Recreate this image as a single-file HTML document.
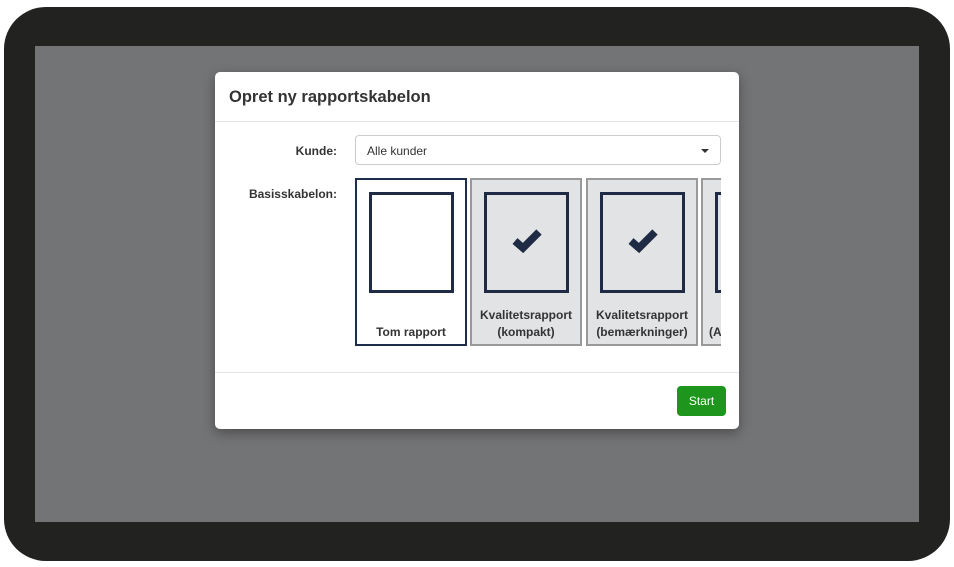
<!DOCTYPE html>
<html><head><meta charset="utf-8"><style>
*{box-sizing:border-box;margin:0;padding:0}
body{width:954px;height:567px;background:#fff;position:relative;overflow:hidden;font-family:"Liberation Sans",sans-serif;color:#333}
.frame{position:absolute;left:4px;top:7px;width:946px;height:554px;background:#222220;border-radius:42px}
.screen{position:absolute;left:35px;top:46px;width:884px;height:476px;background:#737476}
.modal{position:absolute;left:215px;top:72px;width:524px;height:357px;background:#fff;border-radius:5px;box-shadow:0 4px 12px rgba(0,0,0,.35)}
.hdr{height:50px;border-bottom:1px solid #e5e5e5;padding:16px 0 0 14px;font-size:16.5px;font-weight:bold;color:#333}
.lbl{position:absolute;font-size:12px;font-weight:bold;right:402px;text-align:right}
.sel{position:absolute;left:140px;top:63px;width:366px;height:30px;border:1px solid #ccc;border-radius:4px;font-size:12px;padding:8px 0 0 11px}
.sel:after{content:"";position:absolute;right:11px;top:13px;border-left:4px solid transparent;border-right:4px solid transparent;border-top:4px solid #333}
.cards{position:absolute;left:140px;top:106px;width:366px;height:169px;overflow:hidden}
.card{position:absolute;top:0;width:112px;height:168px;border:2px solid #999;background:#e2e3e5}
.card.sel1{border-color:#1f2d4d;background:#fff}
.doc{position:absolute;left:12px;top:12px;width:85px;height:101px;border:3px solid #1f2a44}
.doc svg{position:absolute;left:25px;top:33px}
.cap{position:absolute;left:0;right:0;bottom:3px;text-align:center;font-size:12px;font-weight:bold;line-height:17px}
.ftr{position:absolute;left:0;right:0;top:300px;border-top:1px solid #e5e5e5}
.btn{position:absolute;left:462px;top:314px;width:49px;height:30px;background:#1e961e;border-radius:4px;color:#fff;font-size:12px;text-align:center;line-height:30px}
</style></head><body>
<div class="frame"></div><div class="screen"></div>
<div class="modal">
<div class="hdr">Opret ny rapportskabelon</div>
<div class="lbl" style="top:72px">Kunde:</div>
<div class="sel">Alle kunder</div>
<div class="lbl" style="top:115px">Basisskabelon:</div>
<div class="cards">
<div class="card sel1" style="left:0"><div class="doc"></div><div class="cap">Tom rapport</div></div>
<div class="card" style="left:115px"><div class="doc"><svg width="30" height="28" viewBox="0 0 30 28"><path d="M3 13 L11 20 L27 4" fill="none" stroke="#1f2a44" stroke-width="7.5" stroke-linecap="butt" stroke-linejoin="miter"/></svg></div><div class="cap">Kvalitetsrapport<br>(kompakt)</div></div>
<div class="card" style="left:231px"><div class="doc"><svg width="30" height="28" viewBox="0 0 30 28"><path d="M3 13 L11 20 L27 4" fill="none" stroke="#1f2a44" stroke-width="7.5" stroke-linecap="butt" stroke-linejoin="miter"/></svg></div><div class="cap">Kvalitetsrapport<br>(bemærkninger)</div></div>
<div class="card" style="left:346px"><div class="doc"></div><div class="cap" style="text-align:left;left:6px">(Ar</div></div>
</div>
<div class="ftr"></div>
<div class="btn">Start</div>
</div>
</body></html>
